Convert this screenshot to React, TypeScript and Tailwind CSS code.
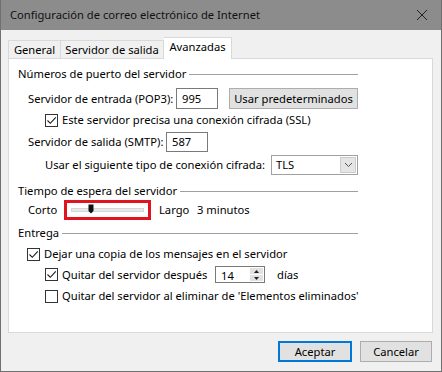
import React from 'react';

const font = { fontFamily: '"Noto Sans", "Open Sans", sans-serif' };

const Check = ({ checked }: { checked: boolean }) => (
  <span className="flex h-[13px] w-[13px] shrink-0 items-center justify-center border border-[#333333] bg-white">
    {checked && (
      <svg width="11" height="11" viewBox="0 0 11 11">
        <path d="M1.5 5.5 L4.3 8.3 L9.8 2.3" fill="none" stroke="#1a1a1a" strokeWidth="1.1" />
      </svg>
    )}
  </span>
);

const GroupHeader = ({ title }: { title: string }) => (
  <div className="flex h-[16px] w-[340px] items-center">
    <span className="whitespace-nowrap">{title}</span>
    <span className="ml-[3px] h-px flex-1 bg-[#a0a0a0]" />
  </div>
);

const App = () => {
  return (
    <div
      className="flex h-[372px] w-[442px] flex-col overflow-hidden whitespace-nowrap border-x border-b border-[#707070] bg-[#f0f0f0] text-[11.2px] leading-none text-black"
      style={font}
    >
      {/* barra de título */}
      <div className="flex h-[30px] shrink-0 items-center justify-between bg-[#8c8c8c] pl-[9px] pr-[4px]">
        <span className="text-[#111111]">Configuración de correo electrónico de Internet</span>
        <svg width="30" height="20" viewBox="0 0 30 20">
          <path d="M10 5 L20 15 M20 5 L10 15" stroke="#222222" strokeWidth="1" />
        </svg>
      </div>

      {/* pestañas */}
      <div className="ml-[7px] mt-[7px] flex h-[21px] items-end">
        <div className="flex h-[18px] w-[53px] items-center justify-center border border-b-0 border-[#d9d9d9] bg-[#f0f0f0]">General</div>
        <div className="flex h-[18px] w-[103px] items-center justify-center border border-b-0 border-l-0 border-[#d9d9d9] bg-[#f0f0f0]">Servidor de salida</div>
        <div className="relative -mb-px flex h-[22px] w-[68px] items-center justify-center border border-b-0 border-l-0 border-[#d9d9d9] bg-white pb-[3px]">Avanzadas</div>
      </div>

      {/* panel */}
      <div className="ml-[7px] flex h-[275px] w-[425px] flex-col border border-[#d9d9d9] bg-white pl-[9px]">
        <div className="mt-[7px]">
          <GroupHeader title="Números de puerto del servidor" />
        </div>

        <div className="ml-[10px] mt-[6px] flex h-[21px] items-center">
          <span className="w-[148px] shrink-0">Servidor de entrada (POP3):</span>
          <div className="flex h-[21px] w-[42px] shrink-0 items-center border border-[#7a7a7a] bg-white pl-[5px]">995</div>
          <button className="ml-[11px] flex h-[21px] w-[129px] shrink-0 items-center justify-center border border-[#adadad] bg-[#e1e1e1]">
            Usar predeterminados
          </button>
        </div>

        <div className="ml-[27px] mt-[4px] flex h-[14px] items-center gap-[4px]">
          <Check checked />
          <span>Este servidor precisa una conexión cifrada (SSL)</span>
        </div>

        <div className="ml-[10px] mt-[5px] flex h-[20px] items-center">
          <span className="w-[138px] shrink-0">Servidor de salida (SMTP):</span>
          <div className="flex h-[20px] w-[42px] shrink-0 items-center border border-[#7a7a7a] bg-white pl-[5px]">587</div>
        </div>

        <div className="ml-[27px] mt-[3px] flex h-[20px] items-center">
          <span className="w-[226px] shrink-0">Usar el siguiente tipo de conexión cifrada:</span>
          <div className="flex h-[20px] w-[87px] shrink-0 items-center justify-between border border-[#a0a0a0] bg-white pl-[4px] pr-px">
            <span>TLS</span>
            <span className="flex h-[16px] w-[16px] items-center justify-center border border-[#cccccc] bg-[#e5e5e5]">
              <svg width="9" height="6" viewBox="0 0 9 6">
                <path d="M1 1 L4.5 4.5 L8 1" fill="none" stroke="#555555" strokeWidth="1" />
              </svg>
            </span>
          </div>
        </div>

        <div className="mt-[8px]">
          <GroupHeader title="Tiempo de espera del servidor" />
        </div>

        <div className="ml-[10px] mt-[1px] flex h-[20px] items-center">
          <span className="w-[36px] shrink-0">Corto</span>
          <div className="flex h-[20px] w-[87px] shrink-0 items-center border-[3px] border-[#e0141e] bg-white px-[4px]">
            <div className="relative h-[4px] w-full border border-[#d6d6d6] bg-[#e7eaea]">
              <svg className="absolute left-[16px] top-[-5px]" width="6" height="10" viewBox="0 0 6 10">
                <path d="M0.5 0.5 H5.5 V7 L3 9.5 L0.5 7 Z" fill="#111111" />
              </svg>
            </div>
          </div>
          <span className="ml-[8px] w-[38px] shrink-0">Largo</span>
          <span>3 minutos</span>
        </div>

        <div className="mt-[5px]">
          <GroupHeader title="Entrega" />
        </div>

        <div className="ml-[9px] mt-[6px] flex h-[14px] items-center gap-[4px]">
          <Check checked />
          <span>Dejar una copia de los mensajes en el servidor</span>
        </div>

        <div className="ml-[27px] mt-[5px] flex h-[17px] items-center">
          <Check checked />
          <span className="ml-[4px] w-[153px] shrink-0">Quitar del servidor después</span>
          <div className="flex h-[17px] w-[50px] shrink-0 items-center justify-between border border-[#7a7a7a] bg-white pl-[5px] pr-px">
            <span className="pt-[2px]">14</span>
            <div className="flex h-[13px] w-[13px] flex-col gap-px">
              <span className="flex flex-1 items-center justify-center bg-[#e1e1e1]">
                <svg width="5" height="3" viewBox="0 0 5 3"><path d="M0 3 L2.5 0 L5 3 Z" fill="#222222" /></svg>
              </span>
              <span className="flex flex-1 items-center justify-center bg-[#e1e1e1]">
                <svg width="5" height="3" viewBox="0 0 5 3"><path d="M0 0 L2.5 3 L5 0 Z" fill="#222222" /></svg>
              </span>
            </div>
          </div>
          <span className="ml-[12px]">días</span>
        </div>

        <div className="ml-[27px] mt-[6px] flex h-[14px] items-center gap-[4px]">
          <Check checked={false} />
          <span>Quitar del servidor al eliminar de 'Elementos eliminados'</span>
        </div>
      </div>

      {/* botones */}
      <div className="mt-[8px] flex justify-end gap-[8px] pr-[9px]">
        <button className="flex h-[21px] w-[74px] items-center justify-center border-2 border-[#0078d7] bg-[#e1e1e1]">Aceptar</button>
        <button className="flex h-[21px] w-[72px] items-center justify-center border border-[#adadad] bg-[#e1e1e1]">Cancelar</button>
      </div>
    </div>
  );
};

export default App;
